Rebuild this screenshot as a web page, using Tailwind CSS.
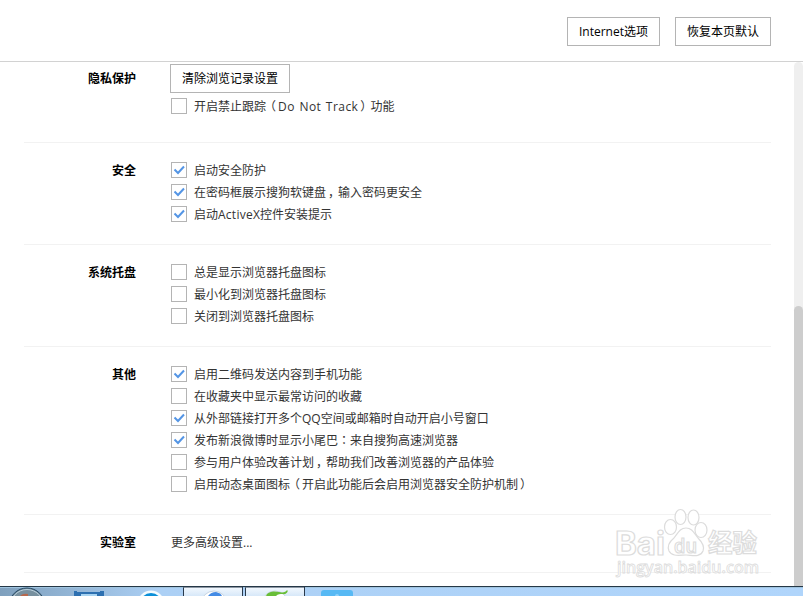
<!DOCTYPE html>
<html lang="zh-CN">
<head>
    <meta charset="UTF-8">
    <meta name="viewport" content="width=device-width, initial-scale=1.0">
    <title>浏览器设置</title>
    <script src="https://cdn.jsdelivr.net/npm/@tailwindcss/browser@4"></script>
</head>
<body class="h-screen overflow-hidden bg-white font-['Open_Sans','Noto_Sans_CJK_SC',sans-serif] text-xs text-[#333]">
    <div class="relative flex h-screen flex-col">
        <!-- Top bar -->
        <header class="flex h-[62px] shrink-0 justify-end gap-[15px] border-b border-[#d2d2d2] pt-[17px] pr-8">
            <button class="h-[29px] w-[93px] border border-[#b4b4b4] pt-px whitespace-nowrap text-black">Internet选项</button>
            <button class="h-[29px] w-24 border border-[#b4b4b4] pt-px whitespace-nowrap text-black">恢复本页默认</button>
        </header>

        <div class="flex min-h-0 flex-1 justify-between">
            <!-- Settings -->
            <main id="settings" class="ml-6 w-[747px]">
                <section class="flex h-[81px] gap-[34px] border-b border-[#f2f2f2] pt-0.5">
                    <h2 class="w-28 text-right leading-[29px] font-bold text-black">隐私保护</h2>
                    <div>
                        <button class="mb-0.5 block h-[29px] w-[120px] border border-[#b4b4b4] pt-px text-black">清除浏览记录设置</button>
                        <div class="rows" data-items="0开启禁止跟踪（Do Not Track）功能"></div>
                    </div>
                </section>
                <section class="flex gap-[34px] border-b border-[#f2f2f2] pt-4 pb-[19px]">
                    <h2 class="w-28 pt-px text-right leading-[22px] font-bold text-black">安全</h2>
                    <div class="rows" data-items="1启动安全防护|1在密码框展示搜狗软键盘，输入密码更安全|1启动ActiveX控件安装提示"></div>
                </section>
                <section class="flex gap-[34px] border-b border-[#f2f2f2] pt-4 pb-[19px]">
                    <h2 class="w-28 pt-px text-right leading-[22px] font-bold text-black">系统托盘</h2>
                    <div class="rows" data-items="0总是显示浏览器托盘图标|0最小化到浏览器托盘图标|0关闭到浏览器托盘图标"></div>
                </section>
                <section class="flex gap-[34px] border-b border-[#f2f2f2] pt-4 pb-[19px]">
                    <h2 class="w-28 pt-px text-right leading-[22px] font-bold text-black">其他</h2>
                    <div class="rows" data-items="1启用二维码发送内容到手机功能|0在收藏夹中显示最常访问的收藏|1从外部链接打开多个QQ空间或邮箱时自动开启小号窗口|1发布新浪微博时显示小尾巴：来自搜狗高速浏览器|0参与用户体验改善计划，帮助我们改善浏览器的产品体验|0启用动态桌面图标（开启此功能后会启用浏览器安全防护机制）"></div>
                </section>
                <section class="flex h-[58px] gap-[34px] border-b border-[#f2f2f2] pt-[17px]">
                    <h2 class="w-28 text-right leading-[22px] font-bold text-black">实验室</h2>
                    <a href="#" class="pl-px leading-[22px]">更多高级设置...</a>
                </section>
            </main>

            <!-- Scrollbar -->
            <div class="flex w-[9px] flex-col rounded-t-full bg-[#efefef] pt-[244px]">
                <div class="flex-1 rounded-t-full bg-[#cdcdcd]"></div>
            </div>
        </div>

        <!-- Watermark -->
        <svg class="absolute top-[504px] left-[610px]" width="160" height="80" fill="#fff" stroke="#dcdcdc" stroke-width="1.2" font-family="Open Sans, Noto Sans CJK SC, sans-serif">
            <text x="5" y="51" font-size="32" font-weight="700" font-family="Inter, sans-serif" textLength="50" lengthAdjust="spacingAndGlyphs">Bai</text>
            <ellipse cx="60.500" cy="23" rx="6" ry="7.5" />
            <ellipse cx="70.500" cy="13" rx="5.5" ry="7.5" />
            <ellipse cx="83.500" cy="13.5" rx="5.5" ry="7.5" />
            <ellipse cx="91" cy="26" rx="6" ry="7.5" />
            <path d="M76 24c-6 0-8 5-12 10-5 4-7 8-5 13 3 6 11 4 17 4s14 3 17-4c2-5-1-9-5-13-4-5-6-10-12-10z" />
            <text x="64" y="49" font-size="20" font-weight="600" textLength="23" lengthAdjust="spacingAndGlyphs">du</text>
            <text x="98" y="48" font-size="25" font-weight="700" textLength="49" lengthAdjust="spacingAndGlyphs">经验</text>
            <text x="7" y="69" font-size="16" font-weight="600" stroke-width="0.8" textLength="142" lengthAdjust="spacingAndGlyphs">jingyan.baidu.com</text>
        </svg>

        <!-- Taskbar -->
        <footer class="flex h-2.5 shrink-0 overflow-hidden border-t border-[#253746] bg-linear-to-r from-[#7fa0bd] via-[#acd0f5] via-20% to-[#b0d5fb]">
            <svg width="803" height="9">
                <defs>
                    <linearGradient id="tab" x2="0" y2="1">
                        <stop offset="0" stop-color="#f4f9fe" />
                        <stop offset="1" stop-color="#d7e8f9" />
                    </linearGradient>
                </defs>
                <path d="M0 .5H803" stroke="#9fc4df" />
                <!-- Start orb -->
                <circle cx="27" cy="19" r="18" fill="#77909f" stroke="#264965" />
                <circle cx="27" cy="19" r="16.500" fill="none" stroke="#b9cedb" />
                <path d="M20 9q3-3 8-2v2z" fill="#b7684d" />
                <!-- Window icon -->
                <path d="M74 4h3v1h23V4h4v5H74z" fill="#2d70b1" />
                <path d="M81 7h16v2H81z" fill="#a7d3f1" />
                <!-- Blue round icon -->
                <circle cx="151" cy="17" r="13.500" fill="#f4fbff" />
                <circle cx="151" cy="17" r="11" fill="#0b8fd8" />
                <!-- Open windows -->
                <path d="M183.500 9V1q0-1 1-1H242.500V9" fill="url(#tab)" stroke="#29394b" />
                <path d="M245.500 9V1q0-1 1-1H304.500V9" fill="url(#tab)" stroke="#29394b" />
                <circle cx="214" cy="17" r="13" fill="#fff" stroke="#c7d4e2" />
                <path d="M208 9q3-4 8-4 5 1 6 4z" fill="#438be5" />
                <circle cx="275" cy="17" r="13" fill="#fff" stroke="#c7d4e2" />
                <path d="M266 9c2-5 9-5 13-4 4 1 7 0 8-2 2 1-1 5-4 4-3 0-5 0-7 2z" fill="#68be38" />
                <path d="M321 9V6q0-3 3-3h26q3 0 3 3v3z" fill="#57b9f4" />
                <circle cx="337" cy="9" r="2" fill="#90d2fb" />
            </svg>
        </footer>
    </div>

    <script>
        const CHECK = '<svg width="14" height="14" fill="none" stroke="#5495e5" stroke-width="2"><path d="M2.500 6.500L6 10l6-6.500" /></svg>';

        // Fullwidth punctuation sits nearer the middle of its cell
        function formatText(text) {
            return text
                .replace('（', '<span class="relative -left-0.5">（</span>')
                .replace('）', '<span class="relative left-0.5">）</span>')
                .replace('，', '<span class="relative left-0.5">，</span>')
                .replace('：', '<span class="font-[\'Noto_Sans_CJK_TC\',sans-serif]" lang="zh-TW">：</span>')
                .replace('Do Not Track', '<span class="tracking-[0.45px] [word-spacing:1px]">Do Not Track</span>')
                .replace('ActiveX', '<span class="tracking-[0.25px]">ActiveX</span>');
        }

        document.querySelectorAll('.rows').forEach(list => {
            list.dataset.items.split('|').forEach(item => {
                const checked = item[0] === '1';
                list.innerHTML += `
                    <label class="flex h-[22px] items-center gap-[7px] pl-px">
                        <span class="size-4 shrink-0 border border-[#b4b4b4]">${checked ? CHECK : ''}</span>
                        <span class="pt-0.5 leading-5 whitespace-nowrap">${formatText(item.slice(1))}</span>
                    </label>`;
            });
        });
    </script>
</body>
</html>
